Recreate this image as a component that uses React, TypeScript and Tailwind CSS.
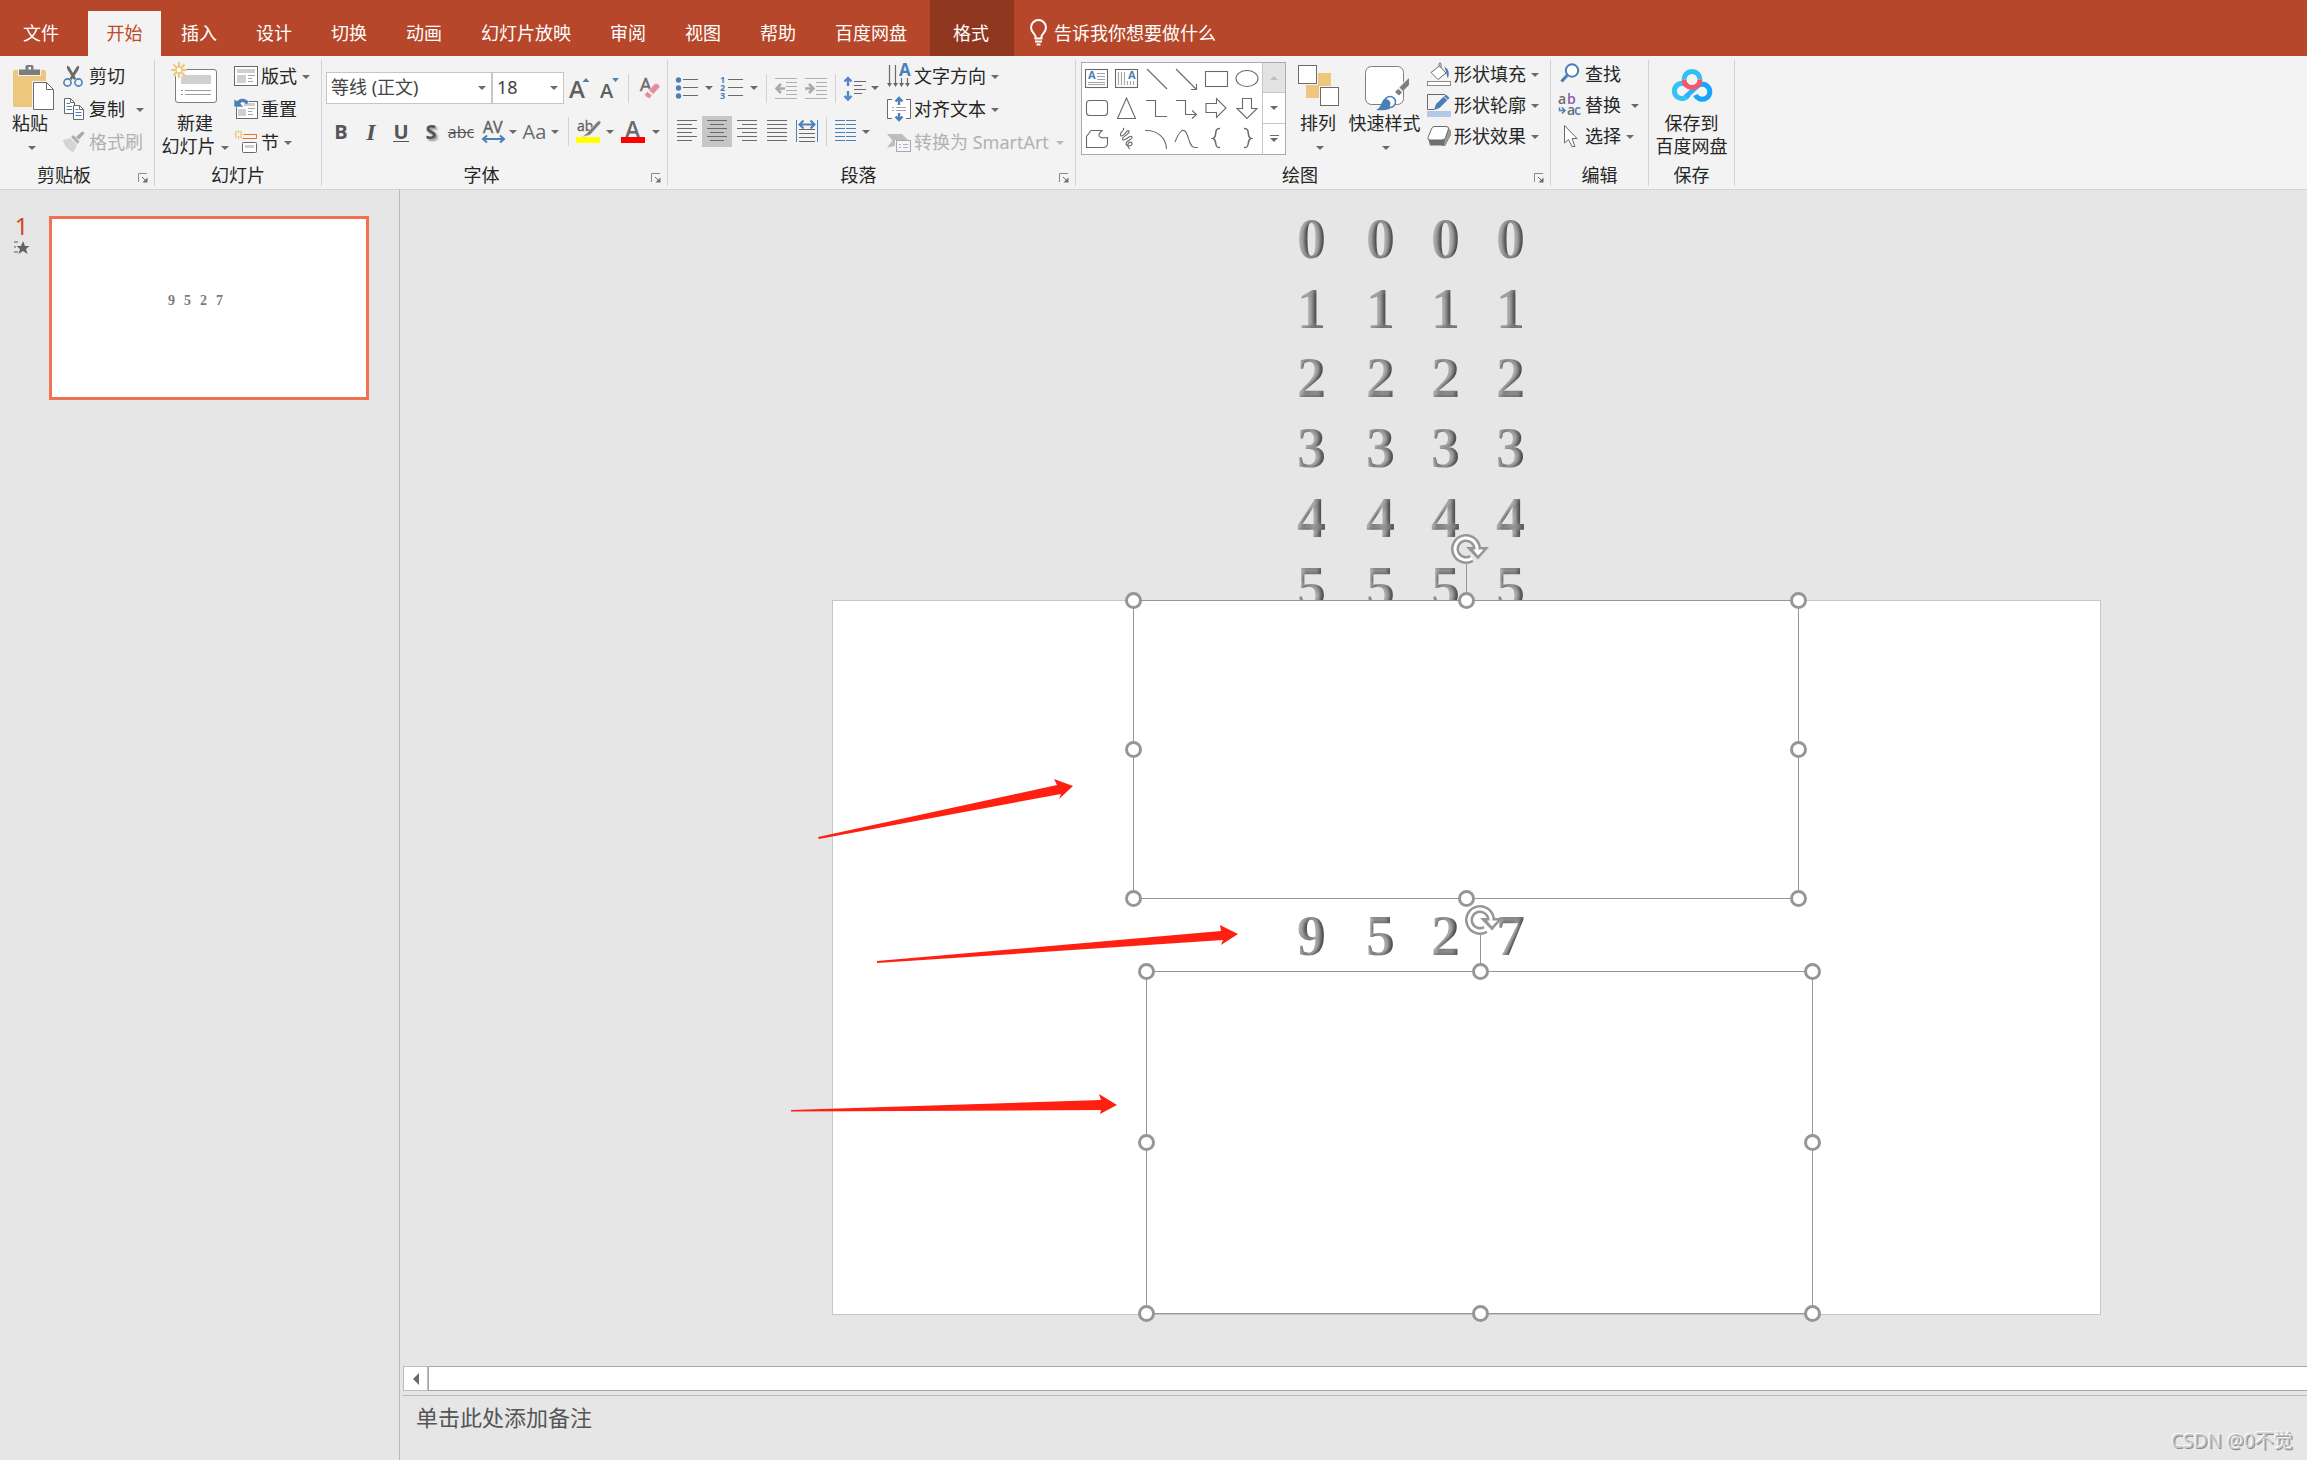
import type { ReactNode } from "react";

const GREY = "#6a6a6a";
const BLUE = "#4a7fb8";
const SAND = "#eec77f";

/* ---------- shared pieces ---------- */

function Caret({ className = "ml-[5px]", fill = GREY }: { className?: string; fill?: string }) {
  return (
    <svg width="8" height="4" viewBox="0 0 8 4" className={`shrink-0 ${className}`} aria-hidden="true">
      <path d="M0 0H8L4 4Z" fill={fill} />
    </svg>
  );
}

function Icon({ w = 24, h = 25, children }: { w?: number; h?: number; children: ReactNode }) {
  return (
    <svg width={w} height={h} viewBox={`0 0 ${w} ${h}`} fill="none" className="shrink-0 overflow-visible" aria-hidden="true">
      {children}
    </svg>
  );
}

function Group({ label, width, launcher, children }: { label: string; width: string; launcher?: boolean; children: ReactNode }) {
  return (
    <section aria-label={label} className={`flex h-[126px] shrink-0 flex-col border-r border-[#d2d2d2] ${width}`}>
      <div className="flex h-[100px] items-start">{children}</div>
      <div className="flex h-[26px] items-end">
        <div className="flex-1 text-center leading-[22px]">{label}</div>
        {launcher && (
          <button aria-label={`${label}选项`} className="mb-[3px] mr-[7px] w-[19px] pl-[10px]">
            <Icon w={10} h={10}>
              <path d="M0.5 9V0.5H9" stroke="#8a8a8a" />
              <path d="M4 4L7 7" stroke={GREY} />
              <path d="M9.500 4.500V9.500H4.500Z" fill={GREY} />
            </Icon>
          </button>
        )}
      </div>
    </section>
  );
}

function SmallButton({
  icon,
  label,
  caret,
  caretClass,
  disabled,
  tight,
}: {
  icon: ReactNode;
  label: string;
  caret?: boolean;
  caretClass?: string;
  disabled?: boolean;
  tight?: boolean;
}) {
  return (
    <button
      disabled={disabled}
      className={`flex items-center whitespace-nowrap ${tight ? "h-[31px] pb-[2px]" : "h-[33px]"} ${disabled ? "text-[#b1b1b1]" : ""}`}
    >
      {icon}
      <span className="ml-[3px] pb-[2px] leading-[22px]">{label}</span>
      {caret && <Caret className={caretClass} fill={disabled ? "#b9b9b9" : GREY} />}
    </button>
  );
}

function BigButton({ icon, lines, caret, width }: { icon: ReactNode; lines: string[]; caret?: boolean; width: string }) {
  return (
    <button className={`flex shrink-0 flex-col items-center whitespace-nowrap ${width}`}>
      {icon}
      <span className="h-[23px] leading-[21px]">{lines[0]}</span>
      <span className="flex h-[23px] items-center leading-[23px]">
        {lines[1] && <span className="pb-[2px] leading-[21px]">{lines[1]}</span>}
        {caret && <Caret className={lines[1] ? "ml-[5px]" : "ml-[3px]"} />}
      </span>
    </button>
  );
}

function Sep({ className }: { className: string }) {
  return <div className={`h-[29px] w-px shrink-0 bg-[#d2d2d2] ${className}`} />;
}

function ToolButton({
  label,
  width,
  pressed,
  start,
  children,
}: {
  label: string;
  width: string;
  pressed?: boolean;
  start?: boolean;
  children: ReactNode;
}) {
  return (
    <button
      aria-label={label}
      aria-pressed={pressed}
      className={`flex h-[31px] shrink-0 items-center font-[Open_Sans,sans-serif] text-[#555] ${start ? "justify-start" : "justify-center"} ${width} ${pressed ? "bg-[#c6c6c6]" : ""}`}
    >
      {children}
    </button>
  );
}

/* ---------- tab strip ---------- */

const TABS = ["插入", "设计", "切换", "动画", "幻灯片放映", "审阅", "视图", "帮助", "百度网盘"];

function TabStrip() {
  return (
    <nav className="flex h-[56px] items-end bg-[#b7472a] text-white">
      <div role="tablist" className="flex">
        <button role="tab" className="h-[45px] w-[88px] pb-[2px] pr-[6px]">文件</button>
        <button role="tab" aria-selected="true" className="h-[45px] w-[73px] bg-[#f3f3f3] pb-[2px] text-[#c0492a]">开始</button>
        {TABS.map((t) => (
          <button key={t} role="tab" className="h-[45px] pb-[2px] pl-[20px] pr-[19px]">
            {t}
          </button>
        ))}
      </div>
      <button className="ml-[4px] h-[56px] w-[84px] bg-[#903720] pr-[2px] pt-[9px]">格式</button>
      <button className="ml-[15px] flex h-[45px] items-center pb-[2px]">
        <Icon w={20} h={28}>
          <path
            d="M6.500 19.500V17.500C6.500 15 2 13.500 2 8.500A7.500 7.500 0 0 1 17 8.500C17 13.500 12.500 15 12.500 17.500V19.500Z"
            stroke="#fff"
            strokeWidth="2"
          />
          <path d="M6 22.500H13M7.500 25.500H11.500" stroke="#fff" strokeWidth="2" />
        </Icon>
        <span className="ml-[5px]">告诉我你想要做什么</span>
      </button>
    </nav>
  );
}

/* ---------- ribbon groups ---------- */

function ClipboardGroup() {
  return (
    <Group label="剪贴板" width="w-[155px]" launcher>
      <BigButton
        width="w-[60px]"
        lines={["粘贴", ""]}
        caret
        icon={
          <Icon w={48} h={53}>
            <rect x="7" y="10" width="33" height="37" rx="1.500" fill={SAND} />
            <path d="M12 8.500H18V4.500H29V8.500H35V16H12Z" fill="#f3f3f3" />
            <path d="M13 9.500H19.500V6.500Q19.500 5 21 5H26Q27.500 5 27.500 6.500V9.500H34V15H13Z" fill="#7d7d7d" />
            <rect x="22.500" y="7" width="2.500" height="2.500" fill="#fff" />
            <path d="M26 21H41L49 29V51H26Z" fill="#f3f3f3" />
            <path d="M27.500 22.500H40.500L47.500 29.500V49.500H27.500Z" fill="#fff" stroke={GREY} />
            <path d="M40.500 22.500V29.500H47.500" stroke={GREY} />
          </Icon>
        }
      />
      <div className="ml-[2px] flex flex-col">
        <SmallButton
          label="剪切"
          icon={
            <Icon>
              <path d="M5 1.500C4.500 4 5.500 6 7 8L12 16L14 14.500L7.500 3Z" fill={GREY} />
              <path d="M17 1.500C17.500 4 16.500 6 15 8L9.500 16L7.500 14.500L14.500 3Z" fill={GREY} />
              <circle cx="5.500" cy="18.500" r="3.600" stroke={BLUE} strokeWidth="1.600" />
              <circle cx="16.500" cy="18.500" r="3.600" stroke={BLUE} strokeWidth="1.600" />
            </Icon>
          }
        />
        <SmallButton
          label="复制"
          caret
          caretClass="ml-[11px]"
          icon={
            <Icon>
              <path d="M2.500 1.500H8.500L12.500 5.500V16.500H2.500Z" fill="#fff" stroke={GREY} />
              <path d="M8.500 1.500V5.500H12.500" stroke={GREY} />
              <path d="M4.500 6.500H8M4.500 9.500H10M4.500 12.500H10" stroke={BLUE} />
              <path d="M11.500 8.500H17.500L21.500 12.500V22.500H11.500Z" fill="#fff" stroke={GREY} />
              <path d="M17.500 8.500V12.500H21.500" stroke={GREY} />
              <path d="M13.500 12.500H16M13.500 15.500H19.500M13.500 18.500H19.500" stroke={BLUE} />
            </Icon>
          }
        />
        <SmallButton
          label="格式刷"
          disabled
          icon={
            <Icon>
              <path d="M1 10L8 8L15 15L11.500 22C8 21 2 17 1 10Z" fill="#d6d2d6" />
              <path d="M9 7L11.500 5L17.500 11.500L15.500 14Z" fill="#b1afb1" />
              <path d="M14 7L20 1.500Q22 1.500 22.500 3.500L17 9.500Z" fill="#a9a9a9" />
            </Icon>
          }
        />
      </div>
    </Group>
  );
}

function SlidesGroup() {
  return (
    <Group label="幻灯片" width="w-[167px]">
      <div className="w-[3px]" />
      <BigButton
        width="w-[74px]"
        lines={["新建", "幻灯片"]}
        caret
        icon={
          <Icon w={48} h={53}>
            <rect x="4.500" y="9.500" width="41" height="33" rx="2.500" fill="#fff" stroke="#7d7d7d" />
            <rect x="10" y="15" width="30" height="9" fill="#d0d0d0" />
            <path d="M10 30.500H12M14 30.500H40M10 34.500H12M14 34.500H40" stroke="#9a9a9a" />
            <circle cx="8" cy="10" r="7" fill="#f3f3f3" />
            <path d="M8 2V7M8 13V18M0 10H5M11 10H16M2.500 4.500L6 8M10 12L13.500 15.500M13.500 4.500L10 8M6 12L2.500 15.500" stroke={SAND} strokeWidth="2" />
            <circle cx="8" cy="10" r="3" fill="#fff" stroke={SAND} strokeWidth="1.500" />
          </Icon>
        }
      />
      <div className="ml-[2px] flex flex-col items-start">
        <SmallButton
          label="版式"
          caret
          icon={
            <Icon>
              <rect x="0.500" y="2.500" width="23" height="19" fill="#fff" stroke={GREY} />
              <rect x="3" y="5" width="18" height="4" fill="#cfcfcf" />
              <rect x="3" y="11" width="9" height="8" fill="#cfcfcf" />
              <path d="M14 11.500H21M14 14.500H18M14 17.500H19" stroke="#a5a5a5" />
            </Icon>
          }
        />
        <SmallButton
          label="重置"
          icon={
            <Icon>
              <rect x="2.500" y="4.500" width="21" height="17" fill="#fff" stroke={GREY} />
              <rect x="10" y="6" width="11" height="3" fill="#cfcfcf" />
              <rect x="4" y="12" width="8" height="7" fill="#cfcfcf" />
              <path d="M14 11.500H21M14 14.500H18M14 17.500H19" stroke="#a5a5a5" />
              <path d="M0 2L3 4C7 0 12 1 15 5L12.500 8C9.500 4.500 8 5 6.500 6.500L9.500 10H0Z" fill={BLUE} stroke="#f3f3f3" strokeWidth="0.600" />
            </Icon>
          }
        />
        <SmallButton
          label="节"
          caret
          icon={
            <Icon>
              <path d="M4.500 0V3M4.500 6V9M0 4.500H3M6 4.500H9M1 1L3 3M8 1L6 3M1 8L3 6M8 8L6 6" stroke={SAND} strokeWidth="1.300" />
              <path d="M10 4.500H22.500V8.500H8.500" stroke="#e0762f" />
              <path d="M11 4.500H23" stroke="#e0762f" />
              <rect x="8.500" y="12.500" width="14" height="10" rx="1" fill="#fff" stroke={GREY} />
              <rect x="11" y="15" width="9" height="3" fill="#cfcfcf" />
            </Icon>
          }
        />
      </div>
    </Group>
  );
}

function Combo({ label, value, width }: { label: string; value: string; width: string }) {
  return (
    <div className={`relative h-[32px] ${width}`}>
      <select
        aria-label={label}
        defaultValue={value}
        className="h-full w-full appearance-none border border-[#c6c6c6] bg-white pb-[2px] pl-[4px] text-[#444]"
      >
        <option>{value}</option>
      </select>
      <Caret className="pointer-events-none absolute right-[6px] top-[14px]" />
    </div>
  );
}

function FontGroup() {
  return (
    <Group label="字体" width="w-[346px]" launcher>
      <div className="ml-[4px] flex flex-col pt-[12px]">
        <div className="flex h-[32px] items-center">
          <Combo label="字体" value="等线 (正文)" width="w-[166px]" />
          <Combo label="字号" value="18" width="w-[72px]" />
          <ToolButton label="增大字号" width="w-[32px]">
            <Icon w={32} h={31}>
              <text x="5" y="25" fontSize="24" fontWeight="600" fill="#5f5f5f" fontFamily="Open Sans">A</text>
              <path d="M18.500 9L22 5L25.500 9Z" fill={BLUE} />
            </Icon>
          </ToolButton>
          <ToolButton label="减小字号" width="w-[28px]">
            <Icon w={28} h={31}>
              <text x="4" y="25" fontSize="20" fontWeight="600" fill="#5f5f5f" fontFamily="Open Sans">A</text>
              <path d="M16 5H23L19.500 9Z" fill={BLUE} />
            </Icon>
          </ToolButton>
          <Sep className="ml-[4px] mr-[6px]" />
          <ToolButton label="清除所有格式" width="w-[30px]">
            <Icon w={30} h={31}>
              <text x="5" y="18" fontSize="18" fill={GREY} stroke={GREY} strokeWidth="0.500" fontFamily="Open Sans">A</text>
              <path d="M14 17L20 10.500Q24 10 25 14L18 21.500Z" fill="#e68a9c" stroke="#f3f3f3" strokeWidth="0.600" />
              <path d="M12.500 18.500L17 22.500L14.500 25.500Q10 24 9.500 21Z" fill="#e68a9c" stroke="#f3f3f3" strokeWidth="0.600" />
            </Icon>
          </ToolButton>
        </div>
        <div className="mt-[12px] flex items-center text-[20px]">
          <ToolButton label="加粗" width="w-[30px]"><b>B</b></ToolButton>
          <ToolButton label="倾斜" width="w-[30px]">
            <b className="font-[Liberation_Serif,serif] text-[24px] italic">I</b>
          </ToolButton>
          <ToolButton label="下划线" width="w-[30px]">
            <b className="border-b border-[#555] leading-[19px]">U</b>
          </ToolButton>
          <ToolButton label="文字阴影" width="w-[30px]">
            <b className="[text-shadow:2px_2px_2px_#999]">S</b>
          </ToolButton>
          <ToolButton label="删除线" width="w-[30px]">
            <s className="text-[16px]">abc</s>
          </ToolButton>
          <ToolButton label="字符间距" width="w-[44px]">
            <Icon w={28} h={31}>
              <text x="3" y="17" fontSize="16" fill="#5f5f5f" stroke="#5f5f5f" strokeWidth="0.400" fontFamily="Open Sans">AV</text>
              <path d="M3 23H24M7 19.500L3 23L7 26.500M20 19.500L24 23L20 26.500" stroke={BLUE} strokeWidth="2" />
            </Icon>
            <Caret className="ml-px" />
          </ToolButton>
          <ToolButton label="更改大小写" width="w-[42px]">
            <span className="text-[20px] text-[#6a6a6a]">Aa</span>
            <Caret />
          </ToolButton>
          <Sep className="ml-[6px] mr-[4px]" />
          <ToolButton label="突出显示颜色" width="w-[44px]">
            <Icon w={28} h={31}>
              <text x="1" y="15" fontSize="14" fill="#5f5f5f" stroke="#5f5f5f" strokeWidth="0.300" fontFamily="Open Sans">ab</text>
              <path d="M11 17L22 5Q25 4 25 7L14 19L6 21Z" fill="#7a7a7a" stroke="#f3f3f3" strokeWidth="0.600" />
              <rect x="0" y="21" width="24" height="6" fill="#ffff00" />
            </Icon>
            <Caret className="ml-[2px]" />
          </ToolButton>
          <ToolButton label="字体颜色" width="w-[45px]">
            <Icon w={28} h={31}>
              <text x="6" y="22" fontSize="23" fontWeight="600" fill={GREY} fontFamily="Open Sans">A</text>
              <rect x="2" y="21" width="24" height="6" fill="#ff0000" />
            </Icon>
            <Caret className="ml-[5px]" />
          </ToolButton>
        </div>
      </div>
    </Group>
  );
}

function AlignIcon({ d }: { d: string }) {
  return (
    <Icon w={20} h={25}>
      <path d={d} stroke={GREY} />
    </Icon>
  );
}

function IndentIcon({ arrow }: { arrow: string }) {
  return (
    <Icon w={24} h={25}>
      <path d="M1 2.500H23M12 6.500H23M12 10.500H23M12 14.500H23M12 18.500H23M1 22.500H23" stroke="#b0b0b0" />
      <path d={arrow} stroke="#a9a9a9" strokeWidth="2.600" />
    </Icon>
  );
}

function ParagraphGroup() {
  return (
    <Group label="段落" width="w-[408px]" launcher>
      <div className="ml-[4px] flex w-[215px] shrink-0 flex-col pt-[12px]">
        <div className="flex h-[32px] items-center pl-[2px]">
          <ToolButton label="项目符号" width="w-[45px]" start>
            <Icon w={28} h={25}>
              <g fill={BLUE}>
                <circle cx="4.500" cy="4" r="2.700" />
                <circle cx="4.500" cy="12" r="2.700" />
                <circle cx="4.500" cy="20" r="2.700" />
              </g>
              <path d="M9 3.500H24M9 11.500H24M9 19.500H24" stroke={GREY} />
            </Icon>
            <Caret className="ml-[3px]" />
          </ToolButton>
          <ToolButton label="编号" width="w-[45px]" start>
            <Icon w={28} h={25}>
              <g fill={BLUE} fontSize="9" fontWeight="700" fontFamily="Open Sans">
                <text x="1" y="7">1</text>
                <text x="1" y="15">2</text>
                <text x="1" y="23">3</text>
              </g>
              <path d="M9 3.500H24M9 11.500H24M9 19.500H24" stroke={GREY} />
            </Icon>
            <Caret className="ml-[3px]" />
          </ToolButton>
          <Sep className="ml-[2px] mr-[4px]" />
          <ToolButton label="降低列表级别" width="w-[30px]">
            <IndentIcon arrow="M11 12.500H3M7 8L2.500 12.500L7 17" />
          </ToolButton>
          <ToolButton label="提高列表级别" width="w-[30px]">
            <IndentIcon arrow="M1 12.500H9M5 8L9.500 12.500L5 17" />
          </ToolButton>
          <Sep className="ml-[4px] mr-[4px]" />
          <ToolButton label="行距" width="w-[40px]" start>
            <Icon w={28} h={25}>
              <path d="M8 3V10M8 15V23M4.500 5.500L8 2L11.500 5.500M4.500 20L8 23.500L11.500 20" stroke="#5585c8" strokeWidth="2.400" />
              <path d="M14 5.500H26M14 9.500H22M14 13.500H26M14 17.500H22" stroke={GREY} />
            </Icon>
            <Caret className="ml-[3px]" />
          </ToolButton>
        </div>
        <div className="mt-[12px] flex items-center">
          <ToolButton label="左对齐" width="w-[30px]">
            <AlignIcon d="M0 1.500H20M0 5.500H15M0 9.500H20M0 13.500H15M0 17.500H20M0 21.500H15" />
          </ToolButton>
          <ToolButton label="居中" width="w-[30px]" pressed>
            <AlignIcon d="M0 1.500H20M3 5.500H17M0 9.500H20M3 13.500H17M0 17.500H20M3 21.500H17" />
          </ToolButton>
          <ToolButton label="右对齐" width="w-[30px]">
            <AlignIcon d="M0 1.500H20M5 5.500H20M0 9.500H20M5 13.500H20M0 17.500H20M5 21.500H20" />
          </ToolButton>
          <ToolButton label="两端对齐" width="w-[30px]">
            <AlignIcon d="M0 1.500H20M0 5.500H20M0 9.500H20M0 13.500H20M0 17.500H20M0 21.500H20" />
          </ToolButton>
          <ToolButton label="分散对齐" width="w-[30px]">
            <Icon w={24} h={25}>
              <path d="M1.500 1V23M22.500 1V23" stroke={BLUE} />
              <path d="M5 5.500H19M8.500 1.500L4.500 5.500L8.500 9.500M15.500 1.500L19.500 5.500L15.500 9.500" stroke={BLUE} strokeWidth="2" />
              <path d="M4 10.500H20M4 14.500H20M4 18.500H20M4 22.500H20" stroke={GREY} />
            </Icon>
          </ToolButton>
          <Sep className="ml-[4px] mr-[4px]" />
          <ToolButton label="分栏" width="w-[40px]" start>
            <Icon w={28} h={25}>
              <path
                d="M4 1.500H14M15 1.500H25M4 5.500H14M15 5.500H25M4 9.500H14M15 9.500H25M4 13.500H14M15 13.500H25M4 17.500H14M15 17.500H25M4 21.500H14M15 21.500H25"
                stroke={BLUE}
              />
            </Icon>
            <Caret className="ml-[3px]" />
          </ToolButton>
        </div>
      </div>
      <div className="flex flex-col items-start">
        <SmallButton
          label="文字方向"
          caret
          icon={
            <Icon>
              <path d="M2.500 1V21M8.500 1V21M14.500 14V21M20.500 14V21" stroke={GREY} strokeWidth="1.200" />
              <path d="M0 19L2.500 23L5 19ZM6 19L8.500 23L11 19ZM12 19L14.500 23L17 19ZM18 19L20.500 23L23 19Z" fill={GREY} />
              <text x="12" y="12" fontSize="17" fontWeight="700" fill={BLUE} fontFamily="Open Sans">A</text>
            </Icon>
          }
        />
        <SmallButton
          label="对齐文本"
          caret
          icon={
            <Icon>
              <rect x="0.500" y="2.500" width="23" height="19" fill="#fff" />
              <path d="M5 2.500H0.500V21.500H5M19 2.500H23.500V21.500H19" stroke={GREY} />
              <path d="M5 10.500H7M9 10.500H19M5 13.500H7M9 13.500H19" stroke="#a5a5a5" />
              <path d="M12 1V8M12 16V23M8.500 4.500L12 1L15.500 4.500M8.500 19.500L12 23L15.500 19.500" stroke={BLUE} strokeWidth="2.400" />
            </Icon>
          }
        />
        <SmallButton
          label="转换为 SmartArt"
          caret
          disabled
          caretClass="ml-[7px]"
          icon={
            <Icon>
              <path d="M0 4H15L21 10H8V16L0 17.500L5.500 10.500Z" fill="#bdbdbd" />
              <rect x="9.500" y="10.500" width="14" height="11" fill="#f6f2f8" stroke="#a9a9a9" />
              <path d="M12 14.500H14M16 14.500H21M12 17.500H14M16 17.500H21" stroke="#b9b0bd" />
            </Icon>
          }
        />
      </div>
    </Group>
  );
}

const SHAPES: { name: string; art: ReactNode }[] = [
  {
    name: "文本框",
    art: (
      <>
        <rect x="0.500" y="3.500" width="22" height="18" />
        <path d="M12 7.500H20M12 10.500H20M12 13.500H20M3 16.500H20M3 18.500H20" stroke="#a5a5a5" />
        <text x="3" y="13" fontSize="11" fontWeight="700" fill={BLUE} stroke="none" fontFamily="Open Sans">A</text>
      </>
    ),
  },
  {
    name: "竖排文本框",
    art: (
      <>
        <rect x="0.500" y="3.500" width="22" height="18" />
        <path d="M3.500 6V19M6.500 6V19M9.500 6V19M12.500 15V19M15.500 15V19M18.500 15V19" stroke="#a5a5a5" />
        <text x="13" y="13" fontSize="11" fontWeight="700" fill={BLUE} stroke="none" fontFamily="Open Sans">A</text>
      </>
    ),
  },
  { name: "直线", art: <path d="M2 3L22 23" /> },
  { name: "箭头", art: <path d="M1 3L21 23M21.500 18V23.500H16" /> },
  { name: "矩形", art: <rect x="0.500" y="5.500" width="22" height="15" /> },
  { name: "椭圆", art: <ellipse cx="12" cy="12.500" rx="11" ry="8" /> },
  { name: "圆角矩形", art: <rect x="1.500" y="4.500" width="21" height="15" rx="3" /> },
  { name: "三角形", art: <path d="M11.500 2L20.500 22.500H2.500Z" /> },
  { name: "肘形连接符", art: <path d="M1 4.500H10.500V20.500H22" /> },
  { name: "肘形箭头连接符", art: <path d="M1 4.500H10.500V18.500H21M17 14.500L21.500 18.500L17 22.500" /> },
  { name: "右箭头", art: <path d="M1 7.500H11.500V2.500L21 12L11.500 21.500V16.500H1Z" /> },
  { name: "下箭头", art: <path d="M7.500 2.500H16.500V12.500H22L12 22.500L2 12.500H7.500Z" /> },
  { name: "任意多边形", art: <path d="M6 4.500H17C12 9 13 13 22.500 11.500V18Q22 21.500 18 21.500H1.500V10.500Z" /> },
  { name: "自由曲线", art: <path d="M8 2C11 4 3 7 6 10C9 11 12 3 14 5C16 8 5 11 8 14C11 15 15 8 17 11C18 14 11 14 11 18C12 21 18 20 17 17C15 14 10 19 15 23" /> },
  { name: "弧形", art: <path d="M0 4.500C12 4 21 11 21.500 23" /> },
  { name: "曲线", art: <path d="M0 16C4 6 7 3 10 5C14 9 14 22 20 21.500H23" /> },
  { name: "左大括号", art: <path d="M15 2.500C8 2 13 11 8 12.500C13 14 8 22 15 21.500" strokeWidth="1.500" /> },
  { name: "右大括号", art: <path d="M9 2.500C16 2 11 11 16 12.500C11 14 16 22 9 21.500" strokeWidth="1.500" /> },
];

function DrawingGroup() {
  return (
    <Group label="绘图" width="w-[475px]" launcher>
      <div className="ml-[5px] mt-[2px] flex h-[93px] w-[205px] shrink-0 border border-[#ababab] bg-white">
        <div className="grid flex-1 grid-cols-6 grid-rows-3">
          {SHAPES.map((s) => (
            <button key={s.name} aria-label={s.name} className="flex items-center justify-center">
              <svg width="24" height="25" viewBox="0 0 24 25" fill="none" stroke={GREY} strokeWidth="1.100" aria-hidden="true" className="overflow-visible">
                {s.art}
              </svg>
            </button>
          ))}
        </div>
        <div className="grid w-[23px] grid-rows-3 divide-y divide-[#c6c6c6] border-l border-[#c6c6c6]">
          <button aria-label="上一行" className="flex items-center justify-center bg-[#e3e3e3]">
            <svg width="8" height="4" viewBox="0 0 8 4" aria-hidden="true"><path d="M0 4H8L4 0Z" fill="#bdbdbd" /></svg>
          </button>
          <button aria-label="下一行" className="flex items-center justify-center">
            <Caret className="" />
          </button>
          <button aria-label="其他形状" className="flex flex-col items-center justify-center gap-[2px]">
            <span className="h-px w-[9px] bg-[#6a6a6a]" />
            <Caret className="" />
          </button>
        </div>
      </div>
      <BigButton
        width="ml-[5px] w-[54px]"
        lines={["排列", ""]}
        caret
        icon={
          <Icon w={44} h={53}>
            <rect x="22" y="13" width="13" height="13" fill={SAND} />
            <rect x="10" y="25" width="13" height="13" fill={SAND} />
            <rect x="2.500" y="5.500" width="18" height="18" fill="#fff" stroke={GREY} />
            <rect x="24.500" y="27.500" width="18" height="18" fill="#fff" stroke={GREY} />
          </Icon>
        }
      />
      <BigButton
        width="w-[79px]"
        lines={["快速样式", ""]}
        caret
        icon={
          <Icon w={48} h={53}>
            <rect x="4.500" y="6.500" width="38" height="38" rx="6" fill="#fff" stroke="#7d7d7d" />
            <path d="M48 17L48 25L38 35L33 31Z" fill="#f3f3f3" />
            <path d="M48 18V25L42 31L38.500 27.500Z" fill="#7d7d7d" />
            <path d="M37.500 29L41 32.500L38 35.500L34 32Z" fill="#7d7d7d" />
            <path d="M15 50C20 48 20 42 23 39C28 36 33 40 32 45C30 50 22 51 15 50Z" fill={BLUE} />
            <circle cx="29" cy="42" r="5.500" fill="#fff" stroke={BLUE} strokeWidth="1.500" />
            <path d="M24 39C29 39 31 43 28 48L22 49Z" fill={BLUE} />
          </Icon>
        }
      />
      <div className="ml-[3px] flex flex-col items-start">
        <SmallButton
          tight
          label="形状填充"
          caret
          icon={
            <Icon>
              <path d="M12 5V1.500Q13 0 14 1.500V9" stroke={GREY} />
              <path d="M4 10.500L12.500 4L19 11L11 17.500Z" fill="#fff" stroke={GREY} />
              <path d="M17 5C21 6 23 10 21 16C19 14 20 9 17 5Z" fill={BLUE} />
              <rect x="0.500" y="19.500" width="23" height="4" fill="#fff" stroke="#8a8a8a" />
            </Icon>
          }
        />
        <SmallButton
          tight
          label="形状轮廓"
          caret
          icon={
            <Icon>
              <path d="M18 1.500H0.500V16.500H7" stroke={GREY} />
              <path d="M7 17L9 11L19 1.500L22.500 5L12.500 15Z" fill={BLUE} />
              <path d="M17 3.500L20.500 7" stroke="#fff" />
              <rect x="0" y="18" width="24" height="6" fill="#b4c7e7" />
            </Icon>
          }
        />
        <SmallButton
          tight
          label="形状效果"
          caret
          icon={
            <Icon>
              <path d="M21 3.500L23.500 7V11L18 21.500H15L17 14Z" fill="#9a9a9a" stroke={GREY} strokeWidth="0.600" />
              <path d="M1 14L3 21.500H17L18 14Z" fill="#6f6f6f" />
              <path d="M7 2.500H19Q22 2.500 21.500 5L18.500 13.500Q17.500 16 15 16H3Q0.500 16 1 13.500L4.500 5Q5.500 2.500 7 2.500Z" fill="#fff" stroke={GREY} />
            </Icon>
          }
        />
      </div>
    </Group>
  );
}

function EditingGroup() {
  return (
    <Group label="编辑" width="w-[98px]">
      <div className="ml-[7px] flex flex-col items-start">
        <SmallButton
          tight
          label="查找"
          icon={
            <Icon>
              <circle cx="14" cy="8.500" r="6.200" fill="#fff" stroke={BLUE} strokeWidth="2" />
              <path d="M9.500 13L3.500 19.500" stroke={BLUE} strokeWidth="3.200" />
            </Icon>
          }
        />
        <SmallButton
          tight
          label="替换"
          caret
          caretClass="ml-[10px]"
          icon={
            <Icon>
              <g fontFamily="Open Sans" fontSize="14" fontWeight="600">
                <text x="0" y="11" fill={GREY}>a</text>
                <text x="9" y="11" fill="#8e5bb5">b</text>
                <text x="9" y="22" fill={GREY}>a</text>
                <text x="16" y="22" fill={BLUE}>c</text>
              </g>
              <path d="M1.500 14.500V17.500H6M4 14.500L7 17.500L4 20.500" stroke={BLUE} strokeWidth="1.500" />
            </Icon>
          }
        />
        <SmallButton
          tight
          label="选择"
          caret
          icon={
            <Icon>
              <path d="M6.500 1.500V19L10.500 15.500L14 22.500H17L14 14.500H19Z" fill="#fff" stroke={GREY} />
            </Icon>
          }
        />
      </div>
    </Group>
  );
}

function SaveGroup() {
  return (
    <Group label="保存" width="w-[86px]">
      <BigButton
        width="w-full"
        lines={["保存到", "百度网盘"]}
        icon={
          <Icon w={42} h={53}>
            <g strokeWidth="5">
              <path d="M17.500 34.500A7.500 7.500 0 1 1 16 25.500" stroke="#35c3f3" />
              <path d="M15 36.500L26 26.500" stroke="#2bb4f8" />
              <path d="M26 26.500A7.500 7.500 0 1 1 24.500 35" stroke="#16a5fb" />
              <path d="M13 19.500A8 8 0 0 1 29 19.500" stroke="#2fc0f5" />
              <path d="M13 19.500A8 8 0 0 0 29 19.500" stroke="#f5566e" />
            </g>
          </Icon>
        }
      />
    </Group>
  );
}

/* ---------- slide list ---------- */

function SlideList() {
  return (
    <aside className="w-[400px] shrink-0 border-r border-[#bababa] pt-[26px]">
      <div className="flex items-start">
        <div className="flex w-[49px] flex-col items-center pr-[6px] text-[#d24726]">
          <span className="text-[24px] leading-[20px]">1</span>
          <svg width="16" height="14" viewBox="0 0 16 14" aria-hidden="true" className="mt-[5px]">
            <path d="M0 1H4M0 6H2M0 11H4" stroke="#555" />
            <path d="M9 0L11 5H15.500L12 8L13.500 13L9 10L4.500 13L6 8L2.500 5H7Z" fill="#626262" />
          </svg>
        </div>
        <button
          aria-label="幻灯片 1"
          className="flex h-[184px] w-[320px] items-start justify-center border-[3px] border-[#f07252] bg-white pr-[27px] pt-[73px] font-[Liberation_Serif,serif] text-[14px] font-bold leading-[18px] text-[#7b7b7b]"
        >
          <span className="flex gap-[9px]">
            <span>9</span>
            <span>5</span>
            <span>2</span>
            <span>7</span>
          </span>
        </button>
      </div>
    </aside>
  );
}

/* ---------- canvas ---------- */

function DigitRow({ digits, className }: { digits: string; className: string }) {
  const columns = ["left-[897px]", "left-[966px]", "left-[1031px]", "left-[1096px]"];
  return (
    <>
      {digits.split("").map((d, i) => (
        <span
          key={i}
          className={`absolute font-[Liberation_Serif,serif] text-[58px] font-bold leading-[70px] [filter:url(#bevel)] ${columns[i]} ${className}`}
        >
          {d}
        </span>
      ))}
    </>
  );
}

function Handle({ className }: { className: string }) {
  return <span className={`absolute h-[17px] w-[17px] rounded-full border-[3px] border-[#969696] bg-white ${className}`} />;
}

function SelectedBox({ className }: { className: string }) {
  return (
    <div className={`absolute border border-[#969696] bg-white ${className}`}>
      <span className="absolute -top-[44px] left-1/2 h-[44px] w-px bg-[#969696]" />
      <svg width="46" height="32" viewBox="-16 -16 46 32" fill="none" aria-hidden="true" className="absolute -top-[68px] left-1/2 -ml-[16px]">
        <path d="M11 0A11 11 0 1 0 5.500 9.500" stroke="#969696" strokeWidth="8" />
        <path d="M0 -2H23L12 10.500Z" fill="#969696" />
        <path d="M11 1A11 11 0 1 0 6 9.200" stroke="#fff" strokeWidth="3" />
        <path d="M7 0.500H17.500L12 6.500Z" fill="#fff" />
      </svg>
      <Handle className="-left-[9px] -top-[9px]" />
      <Handle className="-top-[9px] left-1/2 -ml-[8px]" />
      <Handle className="-right-[9px] -top-[9px]" />
      <Handle className="-left-[9px] top-1/2 -mt-[9px]" />
      <Handle className="-right-[9px] top-1/2 -mt-[9px]" />
      <Handle className="-bottom-[9px] -left-[9px]" />
      <Handle className="-bottom-[9px] left-1/2 -ml-[8px]" />
      <Handle className="-bottom-[9px] -right-[9px]" />
    </div>
  );
}

function Canvas() {
  return (
    <div className="relative min-h-[1176px] flex-1 overflow-hidden">
      <svg width="0" height="0" className="absolute" aria-hidden="true">
        <filter id="bevel" colorInterpolationFilters="sRGB">
          <feGaussianBlur in="SourceAlpha" stdDeviation="2" result="soft" />
          <feDiffuseLighting in="soft" surfaceScale="1.3" diffuseConstant="1" lightingColor="#b4b4b4" result="lit">
            <feDistantLight azimuth="190" elevation="50" />
          </feDiffuseLighting>
          <feComposite in="lit" in2="SourceAlpha" operator="in" />
        </filter>
      </svg>
      <div className="absolute left-[432px] top-[410px] h-[715px] w-[1269px] border border-[#c6c6c6] bg-white" />
      <DigitRow digits="0000" className="top-[14px]" />
      <DigitRow digits="1111" className="top-[84px]" />
      <DigitRow digits="2222" className="top-[153px]" />
      <DigitRow digits="3333" className="top-[223px]" />
      <DigitRow digits="4444" className="top-[293px]" />
      <DigitRow digits="5555" className="top-[362px]" />
      <DigitRow digits="9527" className="top-[711px]" />
      <SelectedBox className="left-[733px] top-[410px] h-[299px] w-[666px]" />
      <SelectedBox className="left-[746px] top-[781px] h-[343px] w-[667px]" />
      <svg width="460" height="350" viewBox="0 0 460 350" fill="#ff2011" aria-hidden="true" className="absolute left-[390px] top-[579px]">
        <path d="M28 68L267 16L264 10L283 17L269 30L271 25L29 70Z" />
        <path d="M87 192L431 162L430 156L448 165L431 176L433 171L87 194Z" />
        <path d="M1 341L311 331L309 325L327 336L310 345L311 341L1 342.500Z" />
      </svg>
    </div>
  );
}

export default function App() {
  return (
    <div className="flex min-h-screen flex-col bg-[#e6e6e6] font-['Noto_Sans','Noto_Sans_CJK_SC',sans-serif] text-[18px] leading-[22px] text-[#262626]">
      <TabStrip />
      <header className="flex h-[134px] border-b border-[#d2d2d2] bg-[#f3f3f3] pt-[4px]">
        <ClipboardGroup />
        <SlidesGroup />
        <FontGroup />
        <ParagraphGroup />
        <DrawingGroup />
        <EditingGroup />
        <SaveGroup />
      </header>
      <div className="flex flex-1">
        <SlideList />
        <main className="relative flex min-w-0 flex-1 flex-col">
          <Canvas />
          <div className="ml-[3px] flex h-[25px]">
            <button aria-label="向左滚动" className="flex w-[25px] items-center justify-center border border-[#bdbdbd] bg-white">
              <svg width="6" height="12" viewBox="0 0 6 12" aria-hidden="true">
                <path d="M6 0V12L0 6Z" fill="#6a6a6a" />
              </svg>
            </button>
            <div className="flex-1 border-y border-l border-[#a6a6a6] bg-white" />
          </div>
          <div className="ml-[2px] mt-[4px] h-[65px] border-t border-[#b9b9b9]">
            <textarea
              aria-label="备注"
              placeholder="单击此处添加备注"
              className="block h-[60px] w-full resize-none bg-transparent pl-[14px] pt-[7px] text-[22px] leading-[28px] outline-none placeholder:text-[#555]"
            />
          </div>
          <span className="absolute bottom-[5px] right-[14px] text-[19px] leading-[28px] text-[#c4c4c4] [text-shadow:-1px_-1px_0_#fff,1px_1px_0_#8c8c8c]">
            CSDN @0不觉
          </span>
        </main>
      </div>
    </div>
  );
}
